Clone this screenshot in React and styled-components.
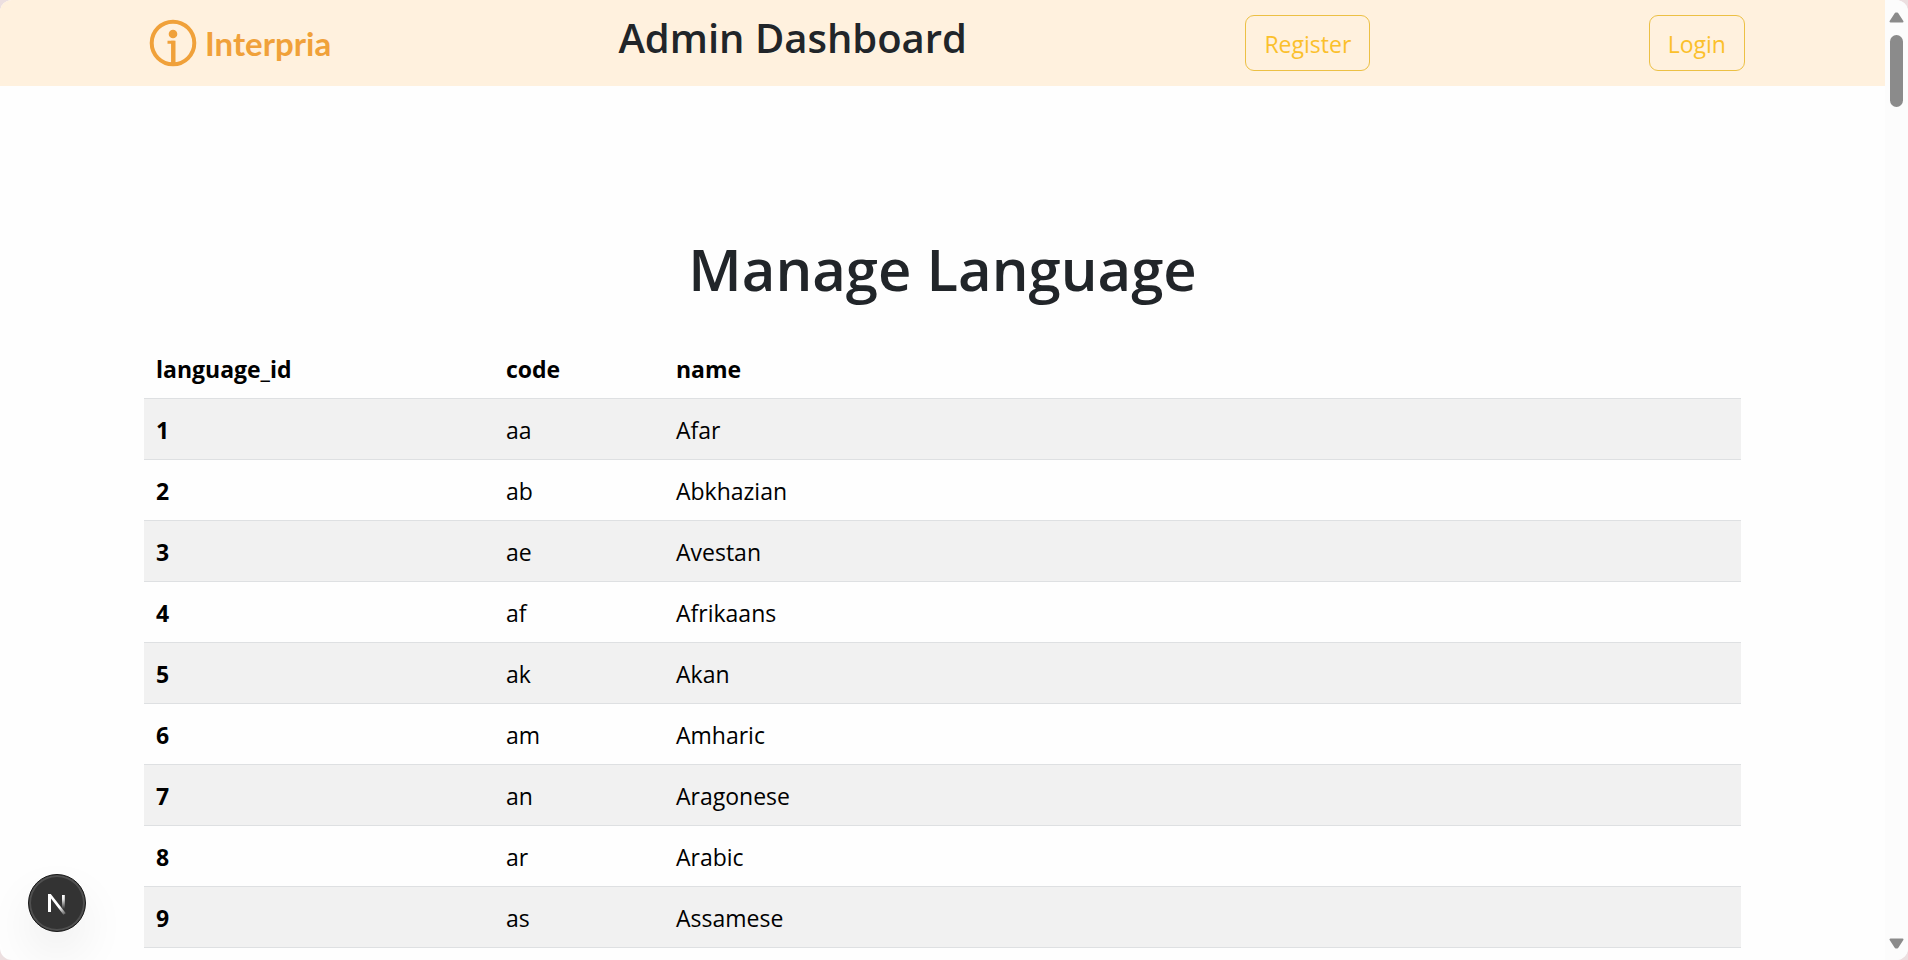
import React from "react";
import styled, { createGlobalStyle } from "styled-components";

const GlobalStyle = createGlobalStyle`
  *, *::before, *::after { box-sizing: border-box; }
  body {
    margin: 0;
    background: #ecdfe0;
    color: #212529;
    font-family: "Open Sans", "Noto Sans", sans-serif;
    font-size: 23px;
    line-height: 36px;
  }
`;

const Window = styled.div`
  display: flex;
  height: 100vh;
  overflow: hidden;
  border-radius: 12px;
  background: #fefefe;
`;

const Page = styled.div`
  flex: 1;
  min-width: 0;
  overflow: hidden;
`;

const Header = styled.header`
  background: #fff1de;
`;

const Nav = styled.nav`
  display: flex;
  justify-content: space-between;
  align-items: flex-start;
  max-width: 1605px;
  margin: 0 auto;
  padding: 15px 0;
`;

const Brand = styled.a`
  display: flex;
  align-items: center;
  gap: 8px;
  width: 200px;
  height: 56px;
  padding-left: 9px;
  color: #f0a13a;
  font-family: Lato, sans-serif;
  font-size: 33px;
  font-weight: 700;
  text-decoration: none;
`;

const Title = styled.h2`
  margin: 0;
  font-size: 40px;
  font-weight: 600;
  line-height: 46px;
`;

const NavButton = styled.button`
  height: 56px;
  padding: 2px 18px 0;
  border: 1px solid #ecc044;
  border-radius: 9px;
  background: transparent;
  color: #fbc02b;
  font: inherit;
  cursor: pointer;
`;

const Main = styled.main`
  max-width: 1597px;
  margin: 0 auto;
  padding-top: 147px;
`;

const Heading = styled.h1`
  margin: 0 0 33px;
  font-size: 58px;
  font-weight: 600;
  line-height: 72px;
  text-align: center;
`;

const Table = styled.table`
  width: 100%;
  border-collapse: collapse;
  table-layout: fixed;
  color: #000;
  text-align: left;

  tbody tr:nth-child(odd) { background: #f1f1f1; }
`;

const Column = styled.col`
  width: ${(p) => p.$width || "auto"};
`;

const Row = styled.tr`
  border-bottom: 1px solid #dee0e2;
`;

const HeadCell = styled.th`
  padding: 13px 12px 11px;
  font-weight: 700;
`;

const Cell = styled.td`
  padding: 13px 12px 11px;
`;

const DevBadge = styled.button`
  position: fixed;
  left: 28px;
  bottom: 28px;
  width: 58px;
  height: 58px;
  padding: 0;
  border: 1px solid #191919;
  border-radius: 50%;
  background: #333;
  box-shadow: inset 0 0 0 2px #505050, 0 22px 48px rgba(0, 0, 0, 0.07);
  cursor: pointer;

  svg { display: block; }
`;

const ScrollTrack = styled.div`
  display: flex;
  flex-direction: column;
  align-items: center;
  width: 23px;
  padding: 12px 0 11px;
  background: #fcfcfc;

  svg:last-child { margin-top: auto; }
`;

const ScrollThumb = styled.div`
  width: 13px;
  height: 72px;
  margin-top: 12px;
  border-radius: 7px;
  background: #8b8b8b;
`;

const LogoMark = () => (
  <svg width="48" height="48" viewBox="0 0 48 48" fill="none" aria-hidden="true">
    <circle cx="24" cy="24" r="21.3" stroke="currentColor" strokeWidth="4" />
    <circle cx="24" cy="15" r="4.3" fill="currentColor" />
    <path d="M18.5 23.3H24V45" stroke="currentColor" strokeWidth="3" />
    <path d="M24.3 21.8V45" stroke="currentColor" strokeWidth="4.4" />
  </svg>
);

const NextMark = () => (
  <svg width="56" height="56" viewBox="0 0 56 56" fill="none" aria-hidden="true">
    <defs>
      <linearGradient id="leg" x1="0" y1="20" x2="0" y2="34" gradientUnits="userSpaceOnUse">
        <stop offset="0" stopColor="#fff" />
        <stop offset="0.3" stopColor="#fff" stopOpacity="0.9" />
        <stop offset="1" stopColor="#fff" stopOpacity="0" />
      </linearGradient>
      <linearGradient id="slash" x1="31" y1="32" x2="37" y2="40" gradientUnits="userSpaceOnUse">
        <stop offset="0" stopColor="#fff" />
        <stop offset="1" stopColor="#fff" stopOpacity="0.1" />
      </linearGradient>
    </defs>
    <path d="M19 37V19H21.8L36.8 38.2L34.4 39.8L22 23.6V37Z" fill="url(#slash)" />
    <path d="M33 20H35.8V34H33Z" fill="url(#leg)" />
  </svg>
);

const Arrow = ({ down }) => (
  <svg width="15" height="11" viewBox="0 0 15 11" aria-hidden="true">
    <path
      d={down ? "M1.5 1.5H13.5L8.3 9.5H6.7Z" : "M1.5 9.5H13.5L8.3 1.5H6.7Z"}
      fill="#8b8b8b"
      stroke="#8b8b8b"
      strokeWidth="2"
      strokeLinejoin="round"
    />
  </svg>
);

const languages = [
  [1, "aa", "Afar"],
  [2, "ab", "Abkhazian"],
  [3, "ae", "Avestan"],
  [4, "af", "Afrikaans"],
  [5, "ak", "Akan"],
  [6, "am", "Amharic"],
  [7, "an", "Aragonese"],
  [8, "ar", "Arabic"],
  [9, "as", "Assamese"],
];

export default function App() {
  return (
    <Window>
      <GlobalStyle />
      <Page>
        <Header>
          <Nav>
            <Brand href="#">
              <LogoMark />
              Interpria
            </Brand>
            <Title>Admin Dashboard</Title>
            <NavButton type="button">Register</NavButton>
            <NavButton type="button">Login</NavButton>
          </Nav>
        </Header>
        <Main>
          <Heading>Manage Language</Heading>
          <Table>
            <colgroup>
              <Column $width="350px" />
              <Column $width="170px" />
              <Column />
            </colgroup>
            <thead>
              <Row>
                <HeadCell scope="col">language_id</HeadCell>
                <HeadCell scope="col">code</HeadCell>
                <HeadCell scope="col">name</HeadCell>
              </Row>
            </thead>
            <tbody>
              {languages.map(([id, code, name]) => (
                <Row key={id}>
                  <HeadCell scope="row">{id}</HeadCell>
                  <Cell>{code}</Cell>
                  <Cell>{name}</Cell>
                </Row>
              ))}
            </tbody>
          </Table>
        </Main>
      </Page>
      <ScrollTrack>
        <Arrow />
        <ScrollThumb />
        <Arrow down />
      </ScrollTrack>
      <DevBadge type="button" aria-label="Open developer tools">
        <NextMark />
      </DevBadge>
    </Window>
  );
}
